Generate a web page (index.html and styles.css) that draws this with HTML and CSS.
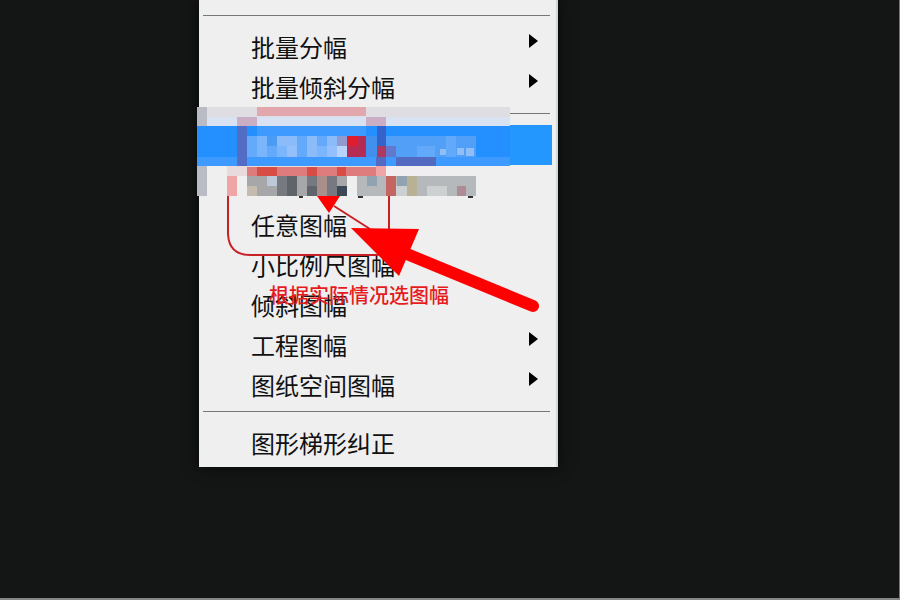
FILE: index.html
```html
<!DOCTYPE html>
<html lang="zh-CN">
<head>
<meta charset="utf-8">
<title>图幅</title>
<link rel="stylesheet" href="styles.css">
</head>
<body>
<main class="desktop">
  <nav class="menu" aria-label="图幅">
    <hr class="rule">
    <button class="item">批量分幅<svg class="arrow" viewBox="0 0 9 14"><path d="M0 0L9 7L0 14Z"/></svg></button>
    <button class="item">批量倾斜分幅<svg class="arrow" viewBox="0 0 9 14"><path d="M0 0L9 7L0 14Z"/></svg></button>
    <hr class="rule">
    <button class="item selected" aria-label="selected"></button>
    <button class="item" aria-label="hidden"></button>
    <button class="item">任意图幅</button>
    <button class="item">小比例尺图幅</button>
    <button class="item">倾斜图幅</button>
    <button class="item">工程图幅<svg class="arrow" viewBox="0 0 9 14"><path d="M0 0L9 7L0 14Z"/></svg></button>
    <button class="item">图纸空间图幅<svg class="arrow" viewBox="0 0 9 14"><path d="M0 0L9 7L0 14Z"/></svg></button>
    <hr class="rule">
    <button class="item">图形梯形纠正</button>
    <svg class="overlay" viewBox="190 0 370 467" aria-hidden="true">
      <g shape-rendering="crispEdges">
        <path fill="#dedde2" d="M197 107H510V117H197Z"/>
        <path fill="#d8e2f3" d="M197 117H510V126H197Z"/>
        <path fill="#b9bcc4" d="M197 107H207V126H197ZM197 166H207V196H197Z"/>
        <path fill="#e2a6ad" d="M257 107H366V116H257Z"/>
        <path fill="#cbaec3" d="M237 117H257V126H237ZM366 117H386V126H366Z"/>
        <path fill="#248fff" d="M197 126H510V166H197Z"/>
        <path fill="#3e9aff" d="M197 157H510V166H197ZM257 126H366V136H257Z"/>
        <path fill="#536dc5" d="M237 126H247V166H237Z"/>
        <path fill="#65a9fb" d="M247 136H347V157H247Z"/>
        <path fill="#7bb5fb" d="M257 136H267V157H257ZM277 146H297V157H277ZM317 146H327V157H317Z"/>
        <path fill="#8bbcf9" d="M277 136H297V146H277ZM307 136H317V157H307ZM327 136H337V146H327Z"/>
        <path fill="#4b9bf5" d="M267 136H277V146H267Z"/>
        <path fill="#93bffc" d="M287 146H297V157H287ZM327 146H337V157H327Z"/>
        <path fill="#b9d4fb" d="M337 146H347V157H337Z"/>
        <path fill="#9299cf" d="M337 136H347V146H337Z"/>
        <path fill="#b62b54" d="M347 136H366V157H347Z"/>
        <path fill="#df1d2c" d="M347 136H357V146H347Z"/>
        <path fill="#438fee" d="M366 136H476V157H366Z"/>
        <path fill="#529ff8" d="M386 136H476V157H386Z"/>
        <path fill="#62a9fa" d="M417 146H435V157H417ZM446 136H456V157H446Z"/>
        <path fill="#8fbff6" d="M440 149H446V155H440ZM457 148H464V155H457ZM466 148H474V156H466Z"/>
        <path fill="#3464cb" d="M377 126H386V146H377Z"/>
        <path fill="#6178cc" d="M377 146H396V157H377Z"/>
        <path fill="#ae385f" d="M377 146H386V157H377Z"/>
        <path fill="#526bc0" d="M376 157H386V166H376ZM396 157H436V166H396Z"/>
        <path fill="#e9dadd" d="M227 166H446V176H227Z"/>
        <path fill="#f0eef0" d="M386 166H446V176H386Z"/>
        <path fill="#dd7b7d" d="M247 167H377V176H247Z"/>
        <path fill="#d84c46" d="M257 167H277V176H257ZM307 167H317V176H307ZM337 167H346V176H337Z"/>
        <path fill="#efa5a5" d="M227 176H237V196H227ZM376 166H386V176H376Z"/>
        <path fill="#a7a7a9" d="M247 176H347V196H247Z"/>
        <path fill="#777980" d="M277 176H297V196H277ZM307 176H317V196H307ZM327 176H337V196H327Z"/>
        <path fill="#5f646b" d="M287 176H297V196H287ZM307 186H317V196H307ZM337 186H347V196H337Z"/>
        <path fill="#bdc9d6" d="M267 176H277V186H267Z"/>
        <path fill="#c5bbaf" d="M247 186H257V196H247Z"/>
        <path fill="#a88f8b" d="M317 176H327V196H317Z"/>
        <path fill="#3d4856" d="M337 186H347V196H337Z"/>
        <path fill="#b6b9bb" d="M357 176H476V196H357Z"/>
        <path fill="#91a2b0" d="M367 176H377V186H367ZM397 176H407V186H397Z"/>
        <path fill="#c56562" d="M386 176H396V196H386Z"/>
        <path fill="#b9b193" d="M407 176H417V196H407Z"/>
        <path fill="#ccd0d1" d="M427 186H447V196H427ZM396 186H407V196H396Z"/>
        <path fill="#ae8c95" d="M457 186H466V196H457Z"/>
        <path fill="#333" d="M299 196H303V198H299ZM358 196H363V198H358ZM468 196H473V198H468Z"/>
      </g>
      <path fill="none" stroke="#c91f25" stroke-width="2" d="M228 196V234Q229 255 250 255H375Q389 255 389 244V196M334 206L370 229"/>
      <path fill="red" d="M317 196H340L329 213ZM351 228L419 229L399 276Z"/>
      <path stroke="red" stroke-width="12" stroke-linecap="round" d="M402 252L533 306"/>
    </svg>
    <p class="note">根据实际情况选图幅</p>
  </nav>
</main>
</body>
</html>
```
FILE: styles.css
```css
* { box-sizing: border-box; }
body { margin: 0; background: #141615; }
.desktop {
  min-height: 100vh;
  padding-left: 199px;
  border-right: 1px solid #777;
  border-bottom: 2px solid #858585;
}
.menu {
  position: relative;
  width: fit-content;
  min-width: 359px;
  padding: 9px 4px 4px;
  background: #efeff0;
  border-right: 2px solid #d2d8da;
  box-shadow: 0 0 14px #060909;
}
.rule {
  height: 1px;
  margin: 6px 2px 11px 0;
  border: 0;
  background: #777;
}
.item {
  display: flex;
  align-items: center;
  justify-content: space-between;
  width: 100%;
  height: 40px;
  padding: 0 14px 0 48px;
  border: 0;
  background: transparent;
  color: #111;
  font: 24px/40px "Noto Sans CJK SC", sans-serif;
}
.item.selected { background: #2497ff; }
.arrow {
  width: 9px;
  height: 14px;
  margin-bottom: 12px;
}
.overlay {
  position: absolute;
  left: -9px;
  top: 0;
  width: 370px;
  height: 467px;
}
.note {
  position: absolute;
  left: 70px;
  top: 283px;
  margin: 0;
  color: #e51b20;
  font: 500 20px/24px "Noto Sans CJK SC", sans-serif;
}
```
